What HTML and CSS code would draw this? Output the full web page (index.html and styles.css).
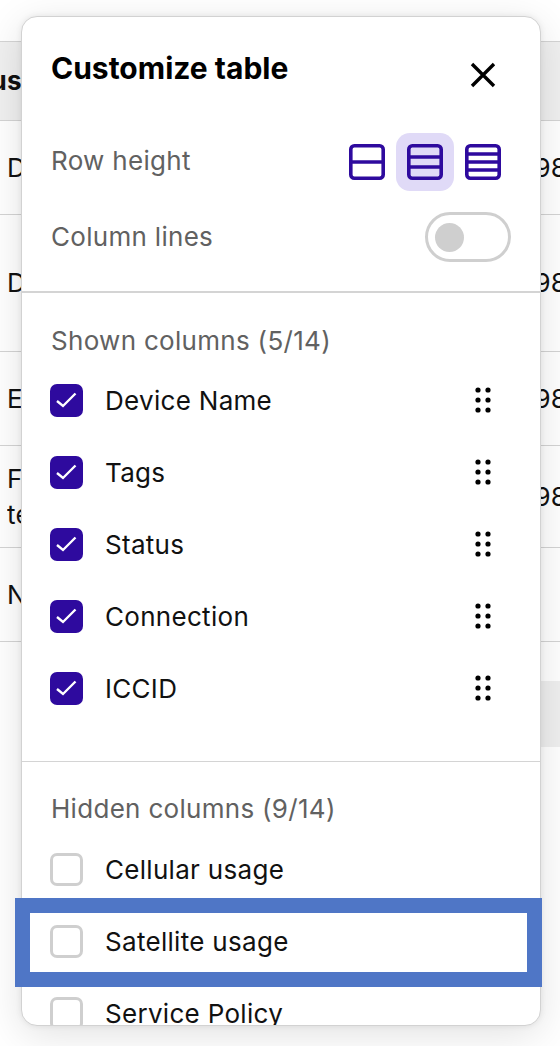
FILE: index.html
```html
<!DOCTYPE html>
<html lang="en">
<head>
    <meta charset="UTF-8">
    <meta name="viewport" content="width=device-width, initial-scale=1.0">
    <title>Customize table</title>
    <link rel="stylesheet" href="styles.css">
</head>
<body>

    <div class="table">
        <div class="table__row table__row--head">
            <span class="cell-left cell-left--bold">Status</span>
        </div>
        <div class="table__row table__row--r1">
            <span class="cell-left">Device</span>
            <span class="cell-right">898</span>
        </div>
        <div class="table__row table__row--r2">
            <span class="cell-left">Device</span>
            <span class="cell-right">898</span>
        </div>
        <div class="table__row table__row--r3">
            <span class="cell-left">Edge</span>
            <span class="cell-right">898</span>
        </div>
        <div class="table__row table__row--r4">
            <span class="cell-left">Field<br>test</span>
            <span class="cell-right">898</span>
        </div>
        <div class="table__row table__row--r3">
            <span class="cell-left">None</span>
        </div>
        <div class="table__end"></div>
        <div class="table__pager"></div>
    </div>

    <div class="panel">
        <div class="panel__head">
            <h1 class="panel__title">Customize table</h1>
            <svg class="panel__close" width="28" height="28" viewBox="0 0 28 28">
                <path d="M3 3 L25 25 M25 3 L3 25" stroke="#000" stroke-width="3.4" fill="none"/>
            </svg>
        </div>

        <div class="setting setting--height">
            <span class="setting__label">Row height</span>
            <div class="heights">
                <span class="heights__btn">
                    <svg width="36" height="36" viewBox="0 0 36 36">
                        <rect x="1.800" y="1.800" width="32.400" height="32.400" rx="3.500" fill="none" stroke="#2e0a9e" stroke-width="3.600"/>
                        <path d="M2 18 H34" stroke="#2e0a9e" stroke-width="3.400"/>
                    </svg>
                </span>
                <span class="heights__btn heights__btn--active">
                    <svg width="36" height="36" viewBox="0 0 36 36">
                        <rect x="1.800" y="1.800" width="32.400" height="32.400" rx="3.500" fill="none" stroke="#2e0a9e" stroke-width="3.600"/>
                        <path d="M2 13 H34 M2 23 H34" stroke="#2e0a9e" stroke-width="3.400"/>
                    </svg>
                </span>
                <span class="heights__btn">
                    <svg width="36" height="36" viewBox="0 0 36 36">
                        <rect x="1.800" y="1.800" width="32.400" height="32.400" rx="3.500" fill="none" stroke="#2e0a9e" stroke-width="3.600"/>
                        <path d="M2 10 H34 M2 18 H34 M2 26 H34" stroke="#2e0a9e" stroke-width="3.400"/>
                    </svg>
                </span>
            </div>
        </div>

        <div class="setting setting--lines">
            <span class="setting__label">Column lines</span>
            <span class="toggle"><span class="toggle__knob"></span></span>
        </div>

        <div class="group group--shown">
            <h2 class="group__title">Shown columns (5/14)</h2>
            <div class="col-row">
                <span class="check check--on"><svg width="33" height="33" viewBox="0 0 33 33"><path d="M7 17 L13 22 L25.500 9.500" stroke="#fff" stroke-width="2.4" fill="none"/></svg></span>
                <span class="col-row__name">Device Name</span>
                <svg class="grip" width="16" height="26" viewBox="0 0 16 26"><g fill="#000"><circle cx="3" cy="3" r="2.6"/><circle cx="13" cy="3" r="2.6"/><circle cx="3" cy="13" r="2.6"/><circle cx="13" cy="13" r="2.6"/><circle cx="3" cy="23" r="2.6"/><circle cx="13" cy="23" r="2.6"/></g></svg>
            </div>
            <div class="col-row">
                <span class="check check--on"><svg width="33" height="33" viewBox="0 0 33 33"><path d="M7 17 L13 22 L25.500 9.500" stroke="#fff" stroke-width="2.4" fill="none"/></svg></span>
                <span class="col-row__name">Tags</span>
                <svg class="grip" width="16" height="26" viewBox="0 0 16 26"><g fill="#000"><circle cx="3" cy="3" r="2.6"/><circle cx="13" cy="3" r="2.6"/><circle cx="3" cy="13" r="2.6"/><circle cx="13" cy="13" r="2.6"/><circle cx="3" cy="23" r="2.6"/><circle cx="13" cy="23" r="2.6"/></g></svg>
            </div>
            <div class="col-row">
                <span class="check check--on"><svg width="33" height="33" viewBox="0 0 33 33"><path d="M7 17 L13 22 L25.500 9.500" stroke="#fff" stroke-width="2.4" fill="none"/></svg></span>
                <span class="col-row__name">Status</span>
                <svg class="grip" width="16" height="26" viewBox="0 0 16 26"><g fill="#000"><circle cx="3" cy="3" r="2.6"/><circle cx="13" cy="3" r="2.6"/><circle cx="3" cy="13" r="2.6"/><circle cx="13" cy="13" r="2.6"/><circle cx="3" cy="23" r="2.6"/><circle cx="13" cy="23" r="2.6"/></g></svg>
            </div>
            <div class="col-row">
                <span class="check check--on"><svg width="33" height="33" viewBox="0 0 33 33"><path d="M7 17 L13 22 L25.500 9.500" stroke="#fff" stroke-width="2.4" fill="none"/></svg></span>
                <span class="col-row__name">Connection</span>
                <svg class="grip" width="16" height="26" viewBox="0 0 16 26"><g fill="#000"><circle cx="3" cy="3" r="2.6"/><circle cx="13" cy="3" r="2.6"/><circle cx="3" cy="13" r="2.6"/><circle cx="13" cy="13" r="2.6"/><circle cx="3" cy="23" r="2.6"/><circle cx="13" cy="23" r="2.6"/></g></svg>
            </div>
            <div class="col-row">
                <span class="check check--on"><svg width="33" height="33" viewBox="0 0 33 33"><path d="M7 17 L13 22 L25.500 9.500" stroke="#fff" stroke-width="2.4" fill="none"/></svg></span>
                <span class="col-row__name">ICCID</span>
                <svg class="grip" width="16" height="26" viewBox="0 0 16 26"><g fill="#000"><circle cx="3" cy="3" r="2.6"/><circle cx="13" cy="3" r="2.6"/><circle cx="3" cy="13" r="2.6"/><circle cx="13" cy="13" r="2.6"/><circle cx="3" cy="23" r="2.6"/><circle cx="13" cy="23" r="2.6"/></g></svg>
            </div>
        </div>

        <div class="group group--hidden">
            <h2 class="group__title">Hidden columns (9/14)</h2>
            <div class="col-row">
                <span class="check"></span>
                <span class="col-row__name">Cellular usage</span>
            </div>
            <div class="col-row">
                <span class="check"></span>
                <span class="col-row__name">Satellite usage</span>
            </div>
            <div class="col-row">
                <span class="check"></span>
                <span class="col-row__name">Service Policy</span>
            </div>
        </div>
    </div>

    <div class="highlight"></div>

</body>
</html>
```

FILE: styles.css
```css
html,
body {
    margin: 0;
    height: 100%;
}

body {
    position: relative;
    height: 1046px;
    overflow: hidden;
    background: #fff;
    font-family: 'Inter', 'Liberation Sans', sans-serif;
    color: #000;
}

.table {
    padding-top: 41px;
}

.table__row {
    display: flex;
    align-items: center;
    justify-content: space-between;
    box-sizing: border-box;
    border-top: 1px solid #d4d4d4;
    font-size: 26px;
    line-height: 36px;
    letter-spacing: 0.3px;
    color: #111;
}

.table__row--head {
    height: 79px;
    background: #f0f0f0;
}

.table__row--r1 {
    height: 94px;
}

.table__row--r2 {
    height: 137px;
}

.table__row--r3 {
    height: 94px;
}

.table__row--r4 {
    height: 102px;
}

.table__end {
    border-top: 1px solid #d4d4d4;
}

.table__pager {
    height: 66px;
    margin: 39px 0 0 300px;
    background: #efefef;
}

.cell-left {
    flex: none;
    width: 14px;
    margin-left: 7px;
    overflow: hidden;
    white-space: nowrap;
}

.cell-left--bold {
    width: auto;
    margin-left: -62px;
    font-weight: 700;
}

.cell-right {
    flex: none;
    width: 48px;
    margin-right: -6px;
    white-space: nowrap;
}

/* the dialog sits on top of the table */
.panel {
    position: absolute;
    left: 21px;
    top: 16px;
    box-sizing: border-box;
    width: 520px;
    height: 1010px;
    overflow: hidden;
    background: #fff;
    border: 1px solid #d2d2d2;
    border-radius: 16px;
    box-shadow: 0 8px 40px rgba(0, 0, 0, 0.12), 0 0 6px rgba(0, 0, 0, 0.08);
}

.panel__head {
    display: flex;
    justify-content: space-between;
    align-items: flex-start;
    box-sizing: border-box;
    height: 101px;
    padding: 33px 43px 0 29px;
}

.panel__title {
    margin: 0;
    font-size: 30px;
    line-height: 36px;
    font-weight: 700;
}

.panel__close {
    margin-top: 11px;
}

.setting {
    display: flex;
    align-items: center;
    justify-content: space-between;
    padding: 0 29px;
}

.setting__label,
.group__title {
    font-size: 26px;
    font-weight: 400;
    letter-spacing: 0.3px;
    color: #616161;
}

.setting--height {
    height: 58px;
    margin-top: 15px;
}

.setting--height .setting__label {
    margin-bottom: 3px;
}

.setting--lines {
    height: 50px;
    margin-top: 21px;
}

.setting--lines .setting__label {
    margin-bottom: 2px;
}

.heights {
    display: flex;
    margin-right: -1px;
}

.heights__btn {
    display: flex;
    align-items: center;
    justify-content: center;
    width: 58px;
    height: 58px;
}

.heights__btn--active {
    background: #e0daf7;
    border-radius: 14px;
}

.toggle {
    display: flex;
    align-items: center;
    box-sizing: border-box;
    width: 86px;
    height: 50px;
    padding-left: 7px;
    border: 3px solid #cfcfcf;
    border-radius: 25px;
}

.toggle__knob {
    width: 29px;
    height: 29px;
    border-radius: 50%;
    background: #cfcfcf;
}

.group {
    padding: 0 28px 0 29px;
    border-top: 1px solid #d4d4d4;
}

.group--shown {
    box-sizing: border-box;
    height: 470px;
    margin-top: 29px;
    border-top-width: 2px;
}

.group__title {
    margin: 0;
    padding-top: 29px;
    line-height: 36px;
}

.group--shown .group__title {
    padding-top: 30px;
}

.col-row {
    display: flex;
    align-items: center;
    height: 72px;
}

.group__title + .col-row {
    margin-top: 5px;
}

.group--hidden .group__title + .col-row {
    margin-top: 6px;
}

.check {
    display: flex;
    flex: none;
    box-sizing: border-box;
    width: 33px;
    height: 33px;
    margin-left: -1px;
    border: 3px solid #cfcfcf;
    border-radius: 7px;
}

.check--on {
    border: none;
    background: #2e0a9e;
}

.col-row__name {
    margin-left: 22px;
    font-size: 26px;
    letter-spacing: 0.3px;
    color: #111;
}

.grip {
    margin-left: auto;
    margin-right: 21px;
}

/* annotation box drawn over the screenshot */
.highlight {
    position: absolute;
    left: 15px;
    top: 898px;
    box-sizing: border-box;
    width: 527px;
    height: 89px;
    border: 15px solid #4f76c6;
}
```
